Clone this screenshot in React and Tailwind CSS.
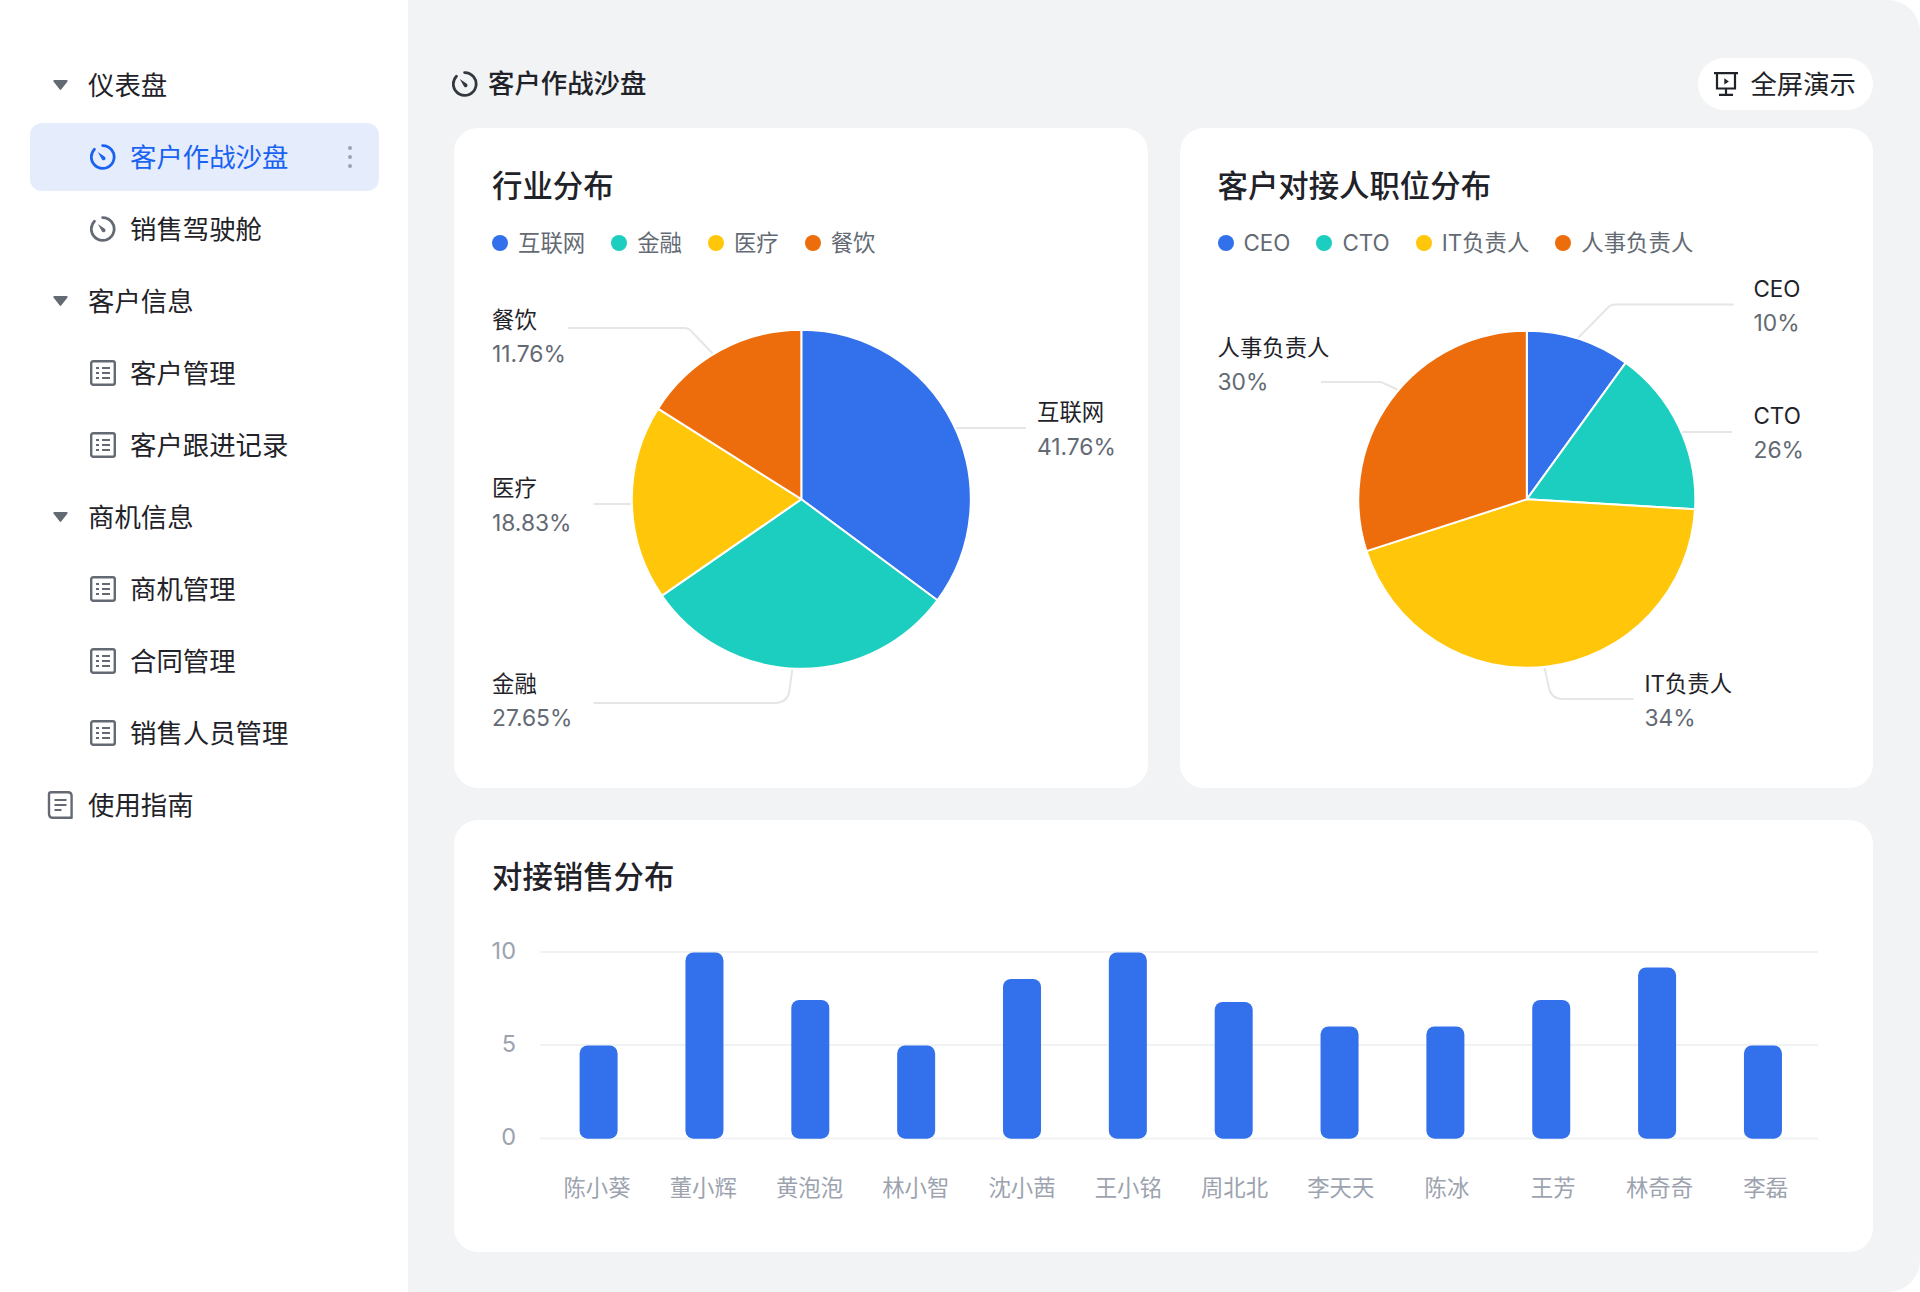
import React from 'react';

const BLUE = '#3370eb';
const TEAL = '#1bcebf';
const YELLOW = '#ffc60a';
const ORANGE = '#ed6d0c';

const nav = [
  { type: 'group', label: '仪表盘' },
  { type: 'clock', label: '客户作战沙盘', active: true },
  { type: 'clock', label: '销售驾驶舱' },
  { type: 'group', label: '客户信息' },
  { type: 'list', label: '客户管理' },
  { type: 'list', label: '客户跟进记录' },
  { type: 'group', label: '商机信息' },
  { type: 'list', label: '商机管理' },
  { type: 'list', label: '合同管理' },
  { type: 'list', label: '销售人员管理' },
  { type: 'doc', label: '使用指南' },
];

const industryPie = {
  cx: 801.3,
  cy: 499.2,
  r: 169.5,
  viewBox: '492 258 617.5 492',
  slices: [
    { color: BLUE, end: 126.6 },
    { color: TEAL, end: 235.3 },
    { color: YELLOW, end: 302.3 },
    { color: ORANGE, end: 360 },
  ],
  lines: [
    'M568.4 328H684Q689 328 692 332L712.7 353.5',
    'M955.6 428H1026',
    'M593.6 504H630.7',
    'M792.3 669.5L789.5 690Q788 703 774 703H593.6',
  ],
  labels: [
    { x: 492, y: 319.5, name: '餐饮', pct: '11.76%', py: 353.5 },
    { x: 492, y: 488, name: '医疗', pct: '18.83%', py: 522.5 },
    { x: 492, y: 683.5, name: '金融', pct: '27.65%', py: 718 },
    { x: 1037, y: 412, name: '互联网', pct: '41.76%', py: 447 },
  ],
};

const rolePie = {
  cx: 1526.3,
  cy: 499.3,
  r: 168.5,
  viewBox: '1217.5 258 617.5 492',
  slices: [
    { color: BLUE, end: 35.9 },
    { color: TEAL, end: 93.4 },
    { color: YELLOW, end: 252.1 },
    { color: ORANGE, end: 360 },
  ],
  lines: [
    'M1733 304.5H1615Q1610 304.5 1607 308L1577 338.5',
    'M1681 432H1731.5',
    'M1544 667.5L1548.5 688Q1551 699 1562 699H1633',
    'M1320.5 382H1380.5L1397 389.5',
  ],
  labels: [
    { x: 1753, y: 288.5, name: 'CEO', pct: '10%', py: 323 },
    { x: 1753, y: 416, name: 'CTO', pct: '26%', py: 450 },
    { x: 1644, y: 684, name: 'IT负责人', pct: '34%', py: 718 },
    { x: 1217, y: 347.5, name: '人事负责人', pct: '30%', py: 382 },
  ],
};

const bars = [
  { name: '陈小葵', top: 1045.5 },
  { name: '董小辉', top: 952.5 },
  { name: '黄泡泡', top: 1000 },
  { name: '林小智', top: 1045.5 },
  { name: '沈小茜', top: 979 },
  { name: '王小铭', top: 952.5 },
  { name: '周北北', top: 1002 },
  { name: '李天天', top: 1026.5 },
  { name: '陈冰', top: 1026.5 },
  { name: '王芳', top: 1000 },
  { name: '林奇奇', top: 967.5 },
  { name: '李磊', top: 1045.5 },
];

function ClockIcon({ className }) {
  return (
    <svg viewBox="0 0 26 26" fill="none" className={className}>
      <path d="M12.6 1.6a11.4 11.4 0 1 1-8.2 3.6" stroke="currentColor" strokeWidth="2.8" strokeLinecap="round" />
      <path d="M7.8 8l6.6 4.6a1.9 1.9 0 1 1-2.5 2.6z" fill="currentColor" />
    </svg>
  );
}

function ListIcon() {
  return (
    <svg viewBox="0 0 26 26" fill="none" className="h-[26px] w-[26px] shrink-0 text-[#646a73]">
      <rect x="1.2" y="1.2" width="23.6" height="23.6" rx="2" stroke="currentColor" strokeWidth="2.4" />
      <path d="M6 8h3M12 8h8M6 13h3M12 13h8M6 18h3M12 18h8" stroke="currentColor" strokeWidth="2.2" />
    </svg>
  );
}

function DocIcon() {
  return (
    <svg viewBox="0 0 26 28" fill="none" className="h-7 w-[26px] shrink-0 text-[#646a73]">
      <path
        d="M2 3.2Q2 1.2 4 1.2H21Q24.6 1.2 24.6 4.8V26.8H6Q2 26.8 2 22.8Z"
        stroke="currentColor"
        strokeWidth="2.4"
        strokeLinejoin="round"
      />
      <path d="M7.5 9h12M7.5 14h12M7.5 19h7" stroke="currentColor" strokeWidth="2.2" />
    </svg>
  );
}

function Caret() {
  return (
    <svg viewBox="0 0 16 11" className="h-[10px] w-[15px] shrink-0 fill-[#646a73]">
      <path d="M1.2 0h13.6c.9 0 1.4 1 .9 1.7L8.8 10.4c-.4.5-1.2.5-1.6 0L.3 1.7C-.2 1 .3 0 1.2 0z" />
    </svg>
  );
}

function PresentIcon() {
  return (
    <svg viewBox="0 0 24 24" fill="none" className="h-6 w-6 shrink-0 text-[#1f2329]">
      <path d="M0 1.2h24M3 1.2V16.5h18V1.2M12 16.5v6M5 22.8h14" stroke="currentColor" strokeWidth="2.2" />
      <path d="M10.3 6.2l4.6 3.2-4.6 3.2z" fill="currentColor" />
    </svg>
  );
}

function NavRow({ item }) {
  if (item.type === 'group') {
    return (
      <div className="flex h-[68px] items-center gap-5 pl-[23px] text-[26.4px] text-[#1f2329]">
        <Caret />
        <span className="mt-px">{item.label}</span>
      </div>
    );
  }
  if (item.type === 'doc') {
    return (
      <div className="flex h-[68px] items-center gap-[15px] pl-[17px] text-[26.4px] text-[#1f2329]">
        <DocIcon />
        <span className="mt-px">{item.label}</span>
      </div>
    );
  }
  return (
    <div
      className={
        item.active
          ? 'flex h-[68px] items-center gap-[14px] rounded-xl bg-[#e5edfd] pl-[60px] pr-[27px] text-[26.4px] text-[#1a62f2]'
          : 'flex h-[68px] items-center gap-[14px] pl-[60px] pr-[27px] text-[26.4px] text-[#1f2329]'
      }
    >
      {item.type === 'clock' ? (
        <ClockIcon className={item.active ? 'h-[26px] w-[26px] shrink-0 text-[#1a62f2]' : 'h-[26px] w-[26px] shrink-0 text-[#646a73]'} />
      ) : (
        <ListIcon />
      )}
      <span className="mt-px">{item.label}</span>
      {item.active && (
        <div className="ml-auto flex flex-col gap-[5px]">
          <span className="h-1 w-1 rounded-full bg-[#9ca3af]" />
          <span className="h-1 w-1 rounded-full bg-[#9ca3af]" />
          <span className="h-1 w-1 rounded-full bg-[#9ca3af]" />
        </div>
      )}
    </div>
  );
}

function Legend({ items }) {
  return (
    <div className="mt-[22px] flex h-[30px] items-center gap-[26px] text-[22.4px] text-[#646a73]">
      {items.map((it) => (
        <div key={it.label} className="flex items-center gap-[10px]">
          <span className="h-4 w-4 rounded-full" style={{ background: it.color }} />
          <span>{it.label}</span>
        </div>
      ))}
    </div>
  );
}

function point(cx, cy, r, deg) {
  const a = (deg * Math.PI) / 180;
  return [cx + r * Math.sin(a), cy - r * Math.cos(a)];
}

function PieChart({ data }) {
  const { cx, cy, r } = data;
  let start = 0;
  return (
    <svg viewBox={data.viewBox} className="block h-[492px] w-full overflow-visible">
      {data.lines.map((d) => (
        <path key={d} d={d} fill="none" stroke="#e5e6e8" strokeWidth="2" />
      ))}
      {data.slices.map((s) => {
        const [x1, y1] = point(cx, cy, r, start);
        const [x2, y2] = point(cx, cy, r, s.end - 0.001);
        const large = s.end - start > 180 ? 1 : 0;
        const d = `M${cx} ${cy}L${x1} ${y1}A${r} ${r} 0 ${large} 1 ${x2} ${y2}Z`;
        start = s.end;
        return <path key={s.color} d={d} fill={s.color} stroke="#fff" strokeWidth="2" strokeLinejoin="round" />;
      })}
      {data.labels.map((l) => (
        <g key={l.name}>
          <text x={l.x} y={l.y + 8} className="fill-[#1f2329] text-[22.4px]">{l.name}</text>
          <text x={l.x} y={l.py + 8} className="fill-[#646a73] text-[22.8px]">{l.pct}</text>
        </g>
      ))}
    </svg>
  );
}

function BarChart() {
  return (
    <svg viewBox="492 897 1343 317" className="block h-[317px] w-full overflow-visible">
      {[
        { y: 952, label: '10' },
        { y: 1045, label: '5' },
        { y: 1138.5, label: '0' },
      ].map((g) => (
        <g key={g.label}>
          <line x1="540" x2="1818" y1={g.y} y2={g.y} stroke="#f1f2f4" strokeWidth="2" />
          <text x="516" y={g.y + 6.5} textAnchor="end" className="fill-[#9ca3af] text-[23.5px]">{g.label}</text>
        </g>
      ))}
      {bars.map((b, i) => {
        const center = 598.6 + i * 105.85;
        return (
          <g key={b.name}>
            <rect x={center - 19} y={b.top} width="38" height={1138.7 - b.top} rx="8" fill={BLUE} />
            <text x={597 + i * 106.25} y="1196" textAnchor="middle" className="fill-[#9ca3af] text-[22.4px]">{b.name}</text>
          </g>
        );
      })}
    </svg>
  );
}

export default function App() {
  return (
    <div className="flex h-[1292px] w-[1920px] overflow-hidden bg-white font-['Inter','Noto_Sans_CJK_SC',sans-serif]">
      {/* Sidebar */}
      <aside className="flex w-[408px] shrink-0 flex-col gap-1 pl-[30px] pr-[29px] pt-[51px]">
        {nav.map((item) => (
          <NavRow key={item.label} item={item} />
        ))}
      </aside>

      {/* Main */}
      <main className="flex-1 rounded-r-[32px] bg-[#f2f3f5] pl-[46px] pr-[47px] pt-[58px]">
        <div className="mb-[18px] flex h-[52px] items-center justify-between">
          <div className="-ml-[2px] flex items-center gap-[10px] text-[26.4px] font-medium text-[#1f2329]">
            <ClockIcon className="h-[26px] w-[26px] shrink-0 text-[#333840]" />
            <span>客户作战沙盘</span>
          </div>
          <div className="flex h-[52px] items-center gap-3 rounded-[26px] bg-white pl-4 pr-[17px] text-[26.4px] text-[#1f2329]">
            <PresentIcon />
            <span className="mt-px">全屏演示</span>
          </div>
        </div>

        <div className="grid grid-cols-2 gap-8">
          <section className="rounded-3xl bg-white px-[38px] pb-[38px] pt-[38px]">
            <h2 className="text-[30.4px] font-medium leading-10 text-[#1f2329]">行业分布</h2>
            <Legend
              items={[
                { label: '互联网', color: BLUE },
                { label: '金融', color: TEAL },
                { label: '医疗', color: YELLOW },
                { label: '餐饮', color: ORANGE },
              ]}
            />
            <PieChart data={industryPie} />
          </section>
          <section className="rounded-3xl bg-white px-[38px] pb-[38px] pt-[38px]">
            <h2 className="text-[30.4px] font-medium leading-10 text-[#1f2329]">客户对接人职位分布</h2>
            <Legend
              items={[
                { label: 'CEO', color: BLUE },
                { label: 'CTO', color: TEAL },
                { label: 'IT负责人', color: YELLOW },
                { label: '人事负责人', color: ORANGE },
              ]}
            />
            <PieChart data={rolePie} />
          </section>
        </div>

        <section className="mt-8 rounded-3xl bg-white px-[38px] pb-[38px] pt-[37px]">
          <h2 className="text-[30.4px] font-medium leading-10 text-[#1f2329]">对接销售分布</h2>
          <BarChart />
        </section>
      </main>
    </div>
  );
}
